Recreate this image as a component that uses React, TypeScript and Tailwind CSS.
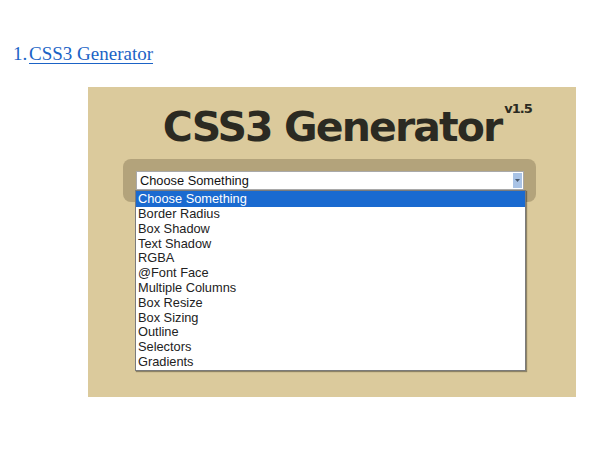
import React from "react";

const items = [
  "Choose Something",
  "Border Radius",
  "Box Shadow",
  "Text Shadow",
  "RGBA",
  "@Font Face",
  "Multiple Columns",
  "Box Resize",
  "Box Sizing",
  "Outline",
  "Selectors",
  "Gradients",
];

export default function App() {
  return (
    <div className="w-[615px] h-[450px] bg-white overflow-hidden">
      <div className="pt-[43px] pl-[13px] flex text-[19px] leading-[22px] text-[#1b63c6]" style={{ fontFamily: '"Liberation Serif", "DejaVu Serif", serif' }}>
        <span className="w-[16px]">1.</span>
        <a href="#" className="underline decoration-1 underline-offset-[3px]">CSS3 Generator</a>
      </div>
      <div className="mt-[22px] ml-[88px] w-[488px] h-[310px] bg-[#dbca9c] relative">
        <div className="pt-[20px] flex justify-center">
          <div className="relative">
            <span className="block text-[41px] leading-[41px] font-bold tracking-[-1.9px] text-[#2b2a22]" style={{ fontFamily: '"DejaVu Sans", Verdana, sans-serif' }}>
              CSS3 Generator
            </span>
            <span className="absolute left-full top-[-5px] ml-[3px] text-[13px] leading-[13px] font-bold tracking-[-1px] text-[#2b2a22]" style={{ fontFamily: '"DejaVu Sans", Verdana, sans-serif' }}>
              v1.5
            </span>
          </div>
        </div>
        <div className="mt-[11px] ml-[35px] w-[413px] h-[43px] rounded-[8px] bg-[#b3a37b] pt-[12px] pl-[13px] relative">
          <div className="w-[388px] h-[19px] bg-white border border-[#a9a9a9] flex items-center relative" style={{ fontFamily: '"Liberation Sans", Arial, sans-serif' }}>
            <span className="pl-[3px] text-[12.8px] text-[#111]">Choose Something</span>
            <div className="absolute right-[1px] top-[1px] bottom-[1px] w-[9px] bg-[#a9c3e6] flex items-center justify-center">
              <svg width="5" height="3" viewBox="0 0 5 3"><path d="M0 0 L5 0 L2.5 3 Z" fill="#4a5a70" /></svg>
            </div>
          </div>
          <div className="absolute left-[12px] top-[31px] w-[391px] bg-white border border-[#7b7b7b] shadow-[1px_1px_1px_rgba(0,0,0,0.35)]" style={{ fontFamily: '"Liberation Sans", Arial, sans-serif' }}>
            {items.map((it, i) => (
              <div key={it} className={(i === 0 ? "bg-[#1a6ad0] text-white pt-[1px] h-[16px] " : "text-[#222] h-[14.8px] ") + "pl-[2px] leading-[14.8px] text-[12.8px]"}>
                {it}
              </div>
            ))}
          </div>
        </div>
      </div>
    </div>
  );
}
